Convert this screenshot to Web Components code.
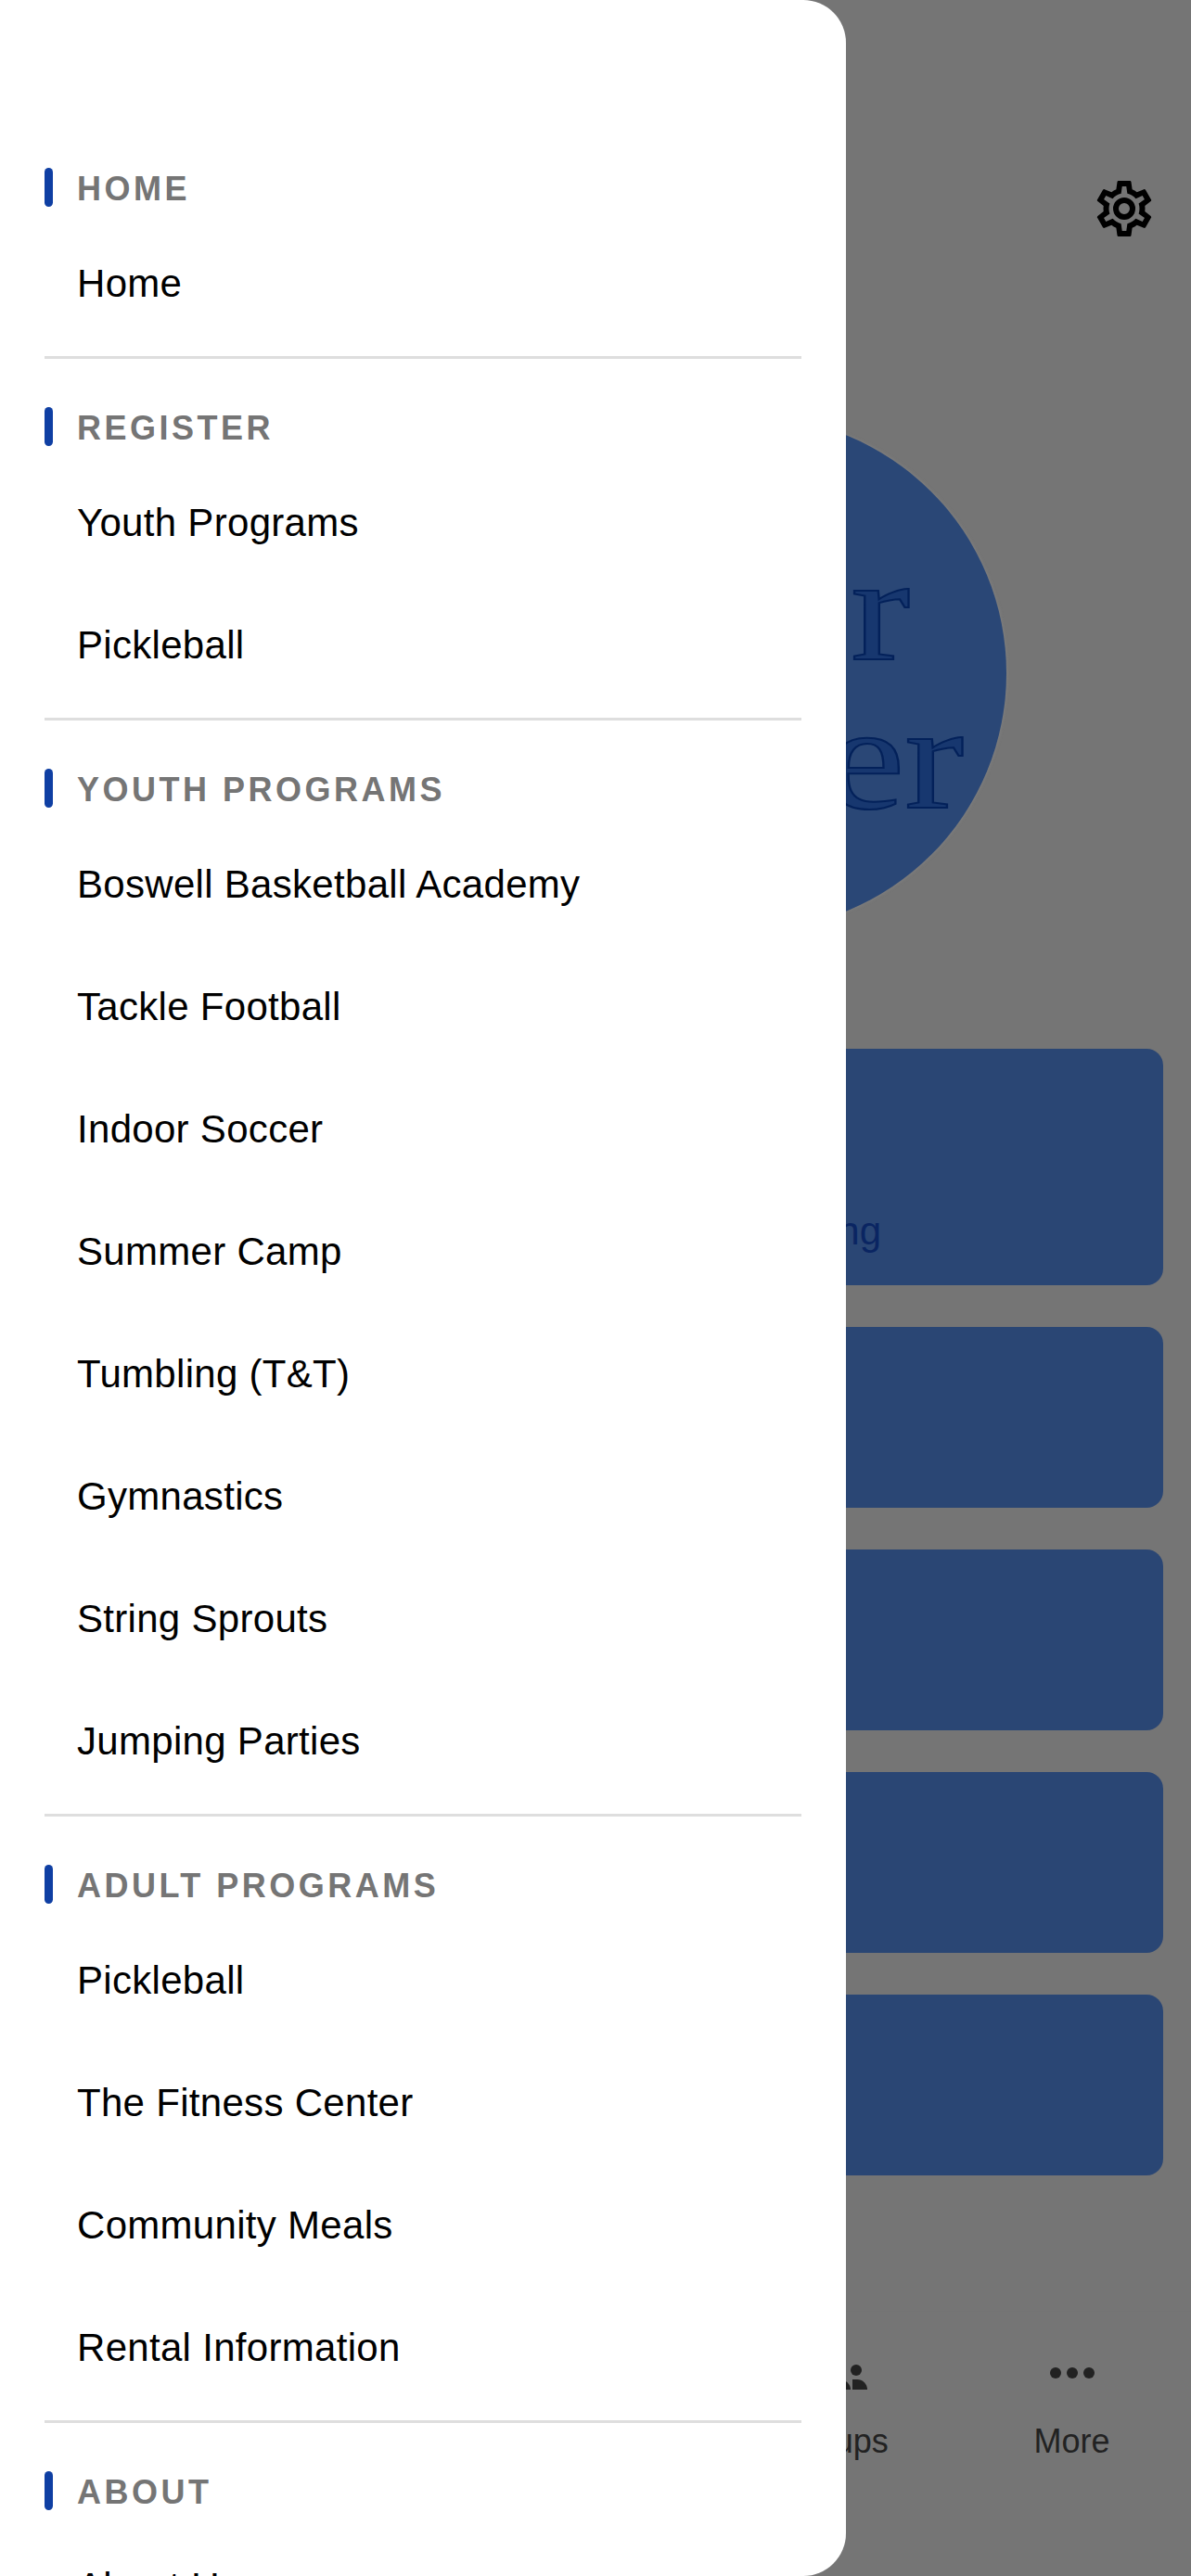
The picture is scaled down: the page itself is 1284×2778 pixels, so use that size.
<!DOCTYPE html>
<html lang="en">
<head>
<meta charset="utf-8">
<title>Drawer</title>
<style>
html,body{margin:0;padding:0;background:#757575}
body{font-family:"Liberation Sans",Arial,sans-serif;width:1284px;height:2778px;overflow:hidden}
</style>
</head>
<body>
<app-shell>
  <home-page slot="page"></home-page>
  <nav-drawer slot="drawer">
    <drawer-section heading="Home">
      <drawer-item>Home</drawer-item>
    </drawer-section>
    <drawer-section heading="Register">
      <drawer-item>Youth Programs</drawer-item>
      <drawer-item>Pickleball</drawer-item>
    </drawer-section>
    <drawer-section heading="Youth Programs">
      <drawer-item>Boswell Basketball Academy</drawer-item>
      <drawer-item>Tackle Football</drawer-item>
      <drawer-item>Indoor Soccer</drawer-item>
      <drawer-item>Summer Camp</drawer-item>
      <drawer-item>Tumbling (T&amp;T)</drawer-item>
      <drawer-item>Gymnastics</drawer-item>
      <drawer-item>String Sprouts</drawer-item>
      <drawer-item>Jumping Parties</drawer-item>
    </drawer-section>
    <drawer-section heading="Adult Programs">
      <drawer-item>Pickleball</drawer-item>
      <drawer-item>The Fitness Center</drawer-item>
      <drawer-item>Community Meals</drawer-item>
      <drawer-item>Rental Information</drawer-item>
    </drawer-section>
    <drawer-section heading="About">
      <drawer-item>About Us</drawer-item>
    </drawer-section>
  </nav-drawer>
</app-shell>
<script>
function define(name, html, init){
  customElements.define(name, class extends HTMLElement{
    constructor(){
      super();
      this.attachShadow({mode:'open'}).innerHTML = html;
    }
    connectedCallback(){ if(init) init(this); }
  });
}

define('app-shell', `
<style>
:host{display:block;position:relative;width:1284px;height:2778px;overflow:hidden;background:#757575}
.over{position:absolute;left:0;top:0}
</style>
<slot name="page"></slot>
<div class="over"><slot name="drawer"></slot></div>`);

define('home-page', `
<style>
:host{display:flex;flex-direction:column;width:1284px;height:2778px;box-sizing:border-box;padding-top:189px;background:#757575}
.gear{display:flex;justify-content:flex-end;padding-right:36px}
svg{display:block}
.cards{display:flex;flex-direction:column;gap:45px;margin-top:128px;padding-right:30px}
</style>
<div class="gear">
  <svg width="72" height="72" viewBox="0 0 24 24" fill="#000"><path d="M12,8A4,4 0 0,1 16,12A4,4 0 0,1 12,16A4,4 0 0,1 8,12A4,4 0 0,1 12,8M12,10A2,2 0 0,0 10,12A2,2 0 0,0 12,14A2,2 0 0,0 14,12A2,2 0 0,0 12,10M10,22C9.75,22 9.54,21.82 9.5,21.58L9.13,18.93C8.5,18.68 7.96,18.34 7.44,17.94L4.95,18.95C4.73,19.03 4.46,18.95 4.34,18.73L2.34,15.27C2.21,15.05 2.27,14.78 2.46,14.63L4.57,12.97L4.5,12L4.57,11L2.46,9.37C2.27,9.22 2.21,8.95 2.34,8.73L4.34,5.27C4.46,5.05 4.73,4.96 4.95,5.05L7.44,6.05C7.96,5.66 8.5,5.32 9.13,5.07L9.5,2.42C9.54,2.18 9.75,2 10,2H14C14.25,2 14.46,2.18 14.5,2.42L14.87,5.07C15.5,5.32 16.04,5.66 16.56,6.05L19.05,5.05C19.27,4.96 19.54,5.05 19.66,5.27L21.66,8.73C21.79,8.95 21.73,9.22 21.54,9.37L19.43,11L19.5,12L19.43,13L21.54,14.63C21.73,14.78 21.79,15.05 21.66,15.27L19.66,18.73C19.54,18.95 19.27,19.04 19.05,18.95L16.56,17.95C16.04,18.34 15.5,18.68 14.87,18.93L14.5,21.58C14.46,21.82 14.25,22 14,22H10M11.25,4L10.88,6.61C9.68,6.86 8.62,7.5 7.85,8.39L5.44,7.35L4.69,8.65L6.8,10.2C6.4,11.37 6.4,12.64 6.8,13.8L4.68,15.36L5.43,16.66L7.86,15.62C8.63,16.5 9.68,17.14 10.87,17.38L11.24,20H12.76L13.13,17.39C14.32,17.14 15.37,16.5 16.14,15.62L18.57,16.66L19.32,15.36L17.2,13.81C17.6,12.64 17.6,11.37 17.2,10.2L19.31,8.65L18.56,7.35L16.15,8.39C15.38,7.5 14.32,6.86 13.12,6.62L12.75,4H11.25Z"/></svg>
</div>
<brand-logo></brand-logo>
<div class="cards">
  <page-card tall>ng</page-card>
  <page-card></page-card>
  <page-card></page-card>
  <page-card></page-card>
  <page-card></page-card>
</div>
<tab-bar></tab-bar>`);

define('brand-logo', `
<style>
:host{display:flex;flex-direction:column;align-items:flex-end;box-sizing:border-box;width:554px;height:554px;margin:188px 0 0 531px;padding:128px 0 0;border-radius:50%;background:#2a4776;box-shadow:0 0 3px 1px rgba(135,135,135,.55);font-family:"Liberation Serif","Times New Roman",serif;font-size:160px;line-height:160px}
span{display:block;color:#17376f;-webkit-text-stroke:2px #03215a;transform:scaleX(1.2);transform-origin:right center}
.a{margin-right:104px}
.b{margin-right:46px}
</style>
<span class="a">r</span><span class="b">er</span>`);

define('page-card', `
<style>
:host{display:flex;justify-content:flex-end;align-items:flex-end;box-sizing:border-box;height:195px;border-radius:18px;background:#2a4674;color:#0a2562;font-size:42px;line-height:50px;padding:0 304px 33px 0}
:host([tall]){height:255px}
</style>
<slot></slot>`);

define('tab-bar', `
<style>
:host{display:flex;justify-content:flex-end;margin-top:146px;padding-top:30px;border-top:1px solid #737373;color:#222}
.tab{display:flex;flex-direction:column;align-items:center;width:256.8px;font-size:36px;line-height:44px}
svg{display:block;margin-bottom:16px}
</style>
<div class="tab">
  <svg width="72" height="72" viewBox="0 0 72 72" fill="#222"><circle cx="12" cy="33" r="6"/><circle cx="60" cy="33" r="6"/><path d="M18 54V49a6 6 0 0 1 6-6h18a12 11 0 0 1 12 11z"/><path d="M56 54V43h5a11 11 0 0 1 11 11z"/><path d="M0 54a11 11 0 0 1 11-11h5V54z"/></svg>
  <span>Groups</span>
</div>
<div class="tab">
  <svg width="72" height="72" viewBox="0 0 72 72" fill="#222"><circle cx="18" cy="36" r="6"/><circle cx="36" cy="36" r="6"/><circle cx="54" cy="36" r="6"/></svg>
  <span>More</span>
</div>`);

define('nav-drawer', `
<style>
:host{display:block;box-sizing:border-box;width:912px;height:2778px;overflow:hidden;padding:129px 48px 0;background:#fff;border-radius:0 46px 46px 0}
</style>
<slot></slot>`);

define('drawer-section', `
<style>
:host{display:block;padding:52px 0 13px;border-bottom:3px solid #dedede}
:host(:last-child){border-bottom:0}
.head{display:flex;align-items:center;gap:26px;height:42px;margin-bottom:16px}
.bar{width:9px;height:42px;border-radius:5px;background:#0f3fa3}
.title{font-size:36px;font-weight:700;letter-spacing:3.5px;padding-top:3px;color:#757575;text-transform:uppercase;white-space:nowrap}
</style>
<div class="head"><div class="bar"></div><div class="title"></div></div>
<slot></slot>`, el => {
  el.shadowRoot.querySelector('.title').textContent = el.getAttribute('heading');
});

define('drawer-item', `
<style>
:host{display:flex;align-items:center;height:132px;padding-left:35px;padding-top:1px;box-sizing:border-box;font-size:42px;letter-spacing:.3px;color:#000;white-space:nowrap}
</style>
<slot></slot>`);
</script>
</body>
</html>
